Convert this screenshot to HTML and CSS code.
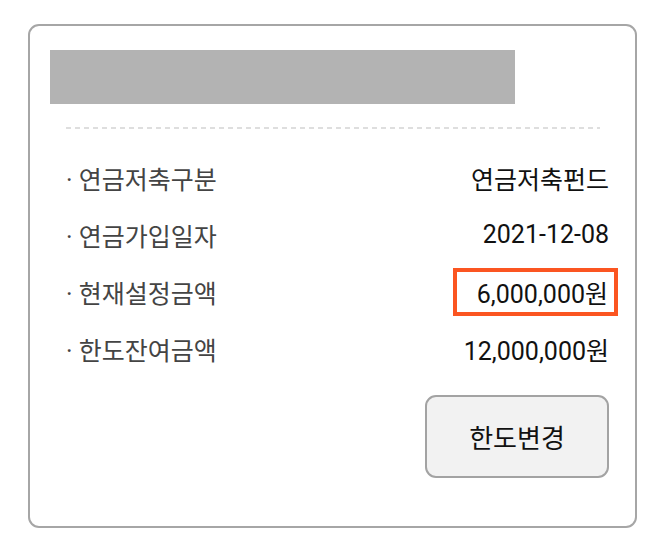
FILE: index.html
```html
<!DOCTYPE html>
<html lang="ko">
<head>
<meta charset="utf-8">
<link rel="stylesheet" href="styles.css">
</head>
<body>
<div class="card">
  <div class="title-bar"></div>
  <div class="divider"></div>
  <ul class="rows">
    <li class="row"><span class="label">· 연금저축구분</span><span class="value">연금저축펀드</span></li>
    <li class="row"><span class="label">· 연금가입일자</span><span class="value">2021-12-08</span></li>
    <li class="row"><span class="label">· 현재설정금액</span><span class="value value-highlight">6,000,000원</span></li>
    <li class="row"><span class="label">· 한도잔여금액</span><span class="value">12,000,000원</span></li>
  </ul>
  <div class="actions">
    <button class="btn" type="button">한도변경</button>
  </div>
</div>
</body>
</html>
```

FILE: styles.css
```css
* { box-sizing: border-box; }
html, body {
  margin: 0;
  padding: 0;
  background: #ffffff;
}
body {
  font-family: Roboto, "Noto Sans CJK KR", sans-serif;
  font-size: 25px;
  color: #111;
}
.card {
  width: 609px;
  margin: 24px 0 0 28px;
  border: 2px solid #a6a6a6;
  border-radius: 11px;
  padding: 24px 26px 48px 20px;
  background: #fff;
}
.title-bar {
  width: 465px;
  height: 54px;
  background: #b3b3b3;
}
.divider {
  height: 2px;
  margin: 23px 9px 0 16px;
  background: repeating-linear-gradient(90deg, #dedede 0 5px, transparent 5px 9px);
}
.rows {
  list-style: none;
  margin: 20px 0 0 16px;
  padding: 0;
}
.row {
  height: 57px;
  display: flex;
  align-items: center;
  justify-content: space-between;
}
.label {
  color: #444;
  white-space: pre;
}
.value {
  color: #111;
}
.value-highlight {
  display: flex;
  align-items: center;
  height: 48px;
  border: 4px solid #fb5521;
  padding: 0 6px 0 20px;
  margin-right: -9px;
}
.actions {
  display: flex;
  justify-content: flex-end;
  margin-top: 18px;
}
.btn {
  width: 184px;
  height: 83px;
  border: 2px solid #a3a3a3;
  border-radius: 11px;
  background: #f2f2f2;
  font-family: Roboto, "Noto Sans CJK KR", sans-serif;
  font-size: 26px;
  color: #111;
  padding: 0;
}
```
